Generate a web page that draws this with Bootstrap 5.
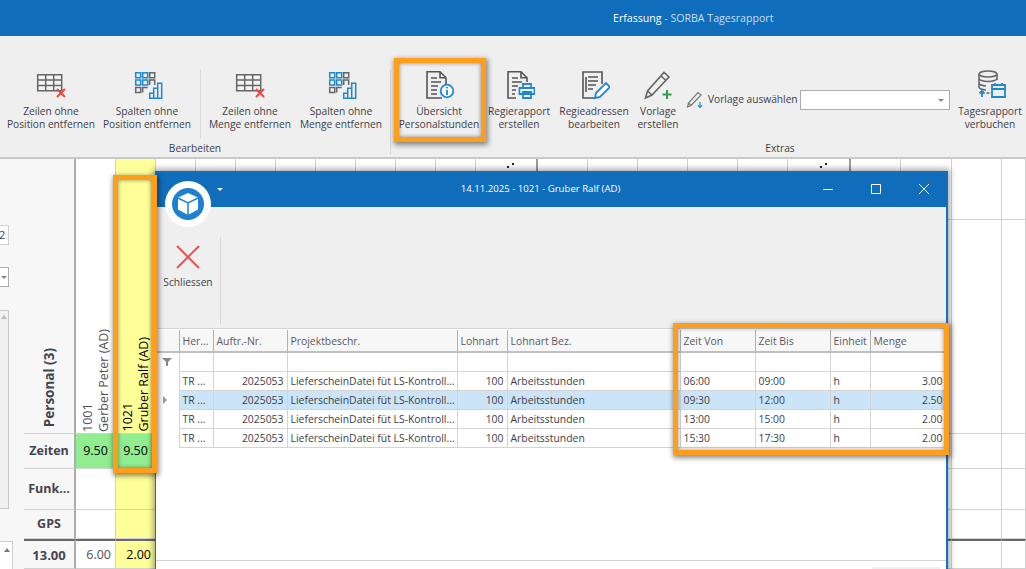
<!DOCTYPE html>
<html lang="de">

<head>
    <meta charset="UTF-8">
    <meta name="viewport" content="width=device-width, initial-scale=1.0">
    <title>Erfassung - SORBA Tagesrapport</title>
    <link rel="stylesheet" href="https://cdn.jsdelivr.net/npm/bootstrap@5.3.0/dist/css/bootstrap.min.css">
    <style>
        html, body { height: 569px; overflow: hidden; }
        body { width: 1026px; position: relative; font-family: "Open Sans", "Liberation Sans", sans-serif; font-size: 10.2px; color: #3e3e48; background: #fff; }

        .app-title { height: 36px; background: #0f6dbc; color: #c9def0; padding-left: 613px; line-height: 36px; font-size: 10.6px; }
        .app-title b { color: #fff; font-weight: 400; }

        .ribbon { height: 123px; background: #efefef; border-bottom: 2px solid #c9c9c9; padding-top: 33px; overflow: hidden; }
        .rb-group { height: 86px; flex: none; position: relative; }
        .rb-first { width: 391px; border-right: 1px solid #d8d8d8; padding-left: 3px; }
        .rb-second { width: 778px; padding-left: 5px; }
        .rb-sep { width: 1px; height: 70px; background: #d8d8d8; margin: 0 4px 0 5px; flex: none; }
        .rb-label { text-align: center; line-height: 13px; position: absolute; left: 0; right: 0; bottom: 0; }
        .rb-btn { flex: none; text-align: center; line-height: 13px; white-space: nowrap; }
        .rb-btn svg { display: block; margin: 0 auto 4px; }
        .w-96 { width: 96px; } .w-90 { width: 90px; } .w-92 { width: 92px; } .w-86 { width: 86px; }
        .w-74 { width: 74px; } .w-76 { width: 76px; } .w-52 { width: 52px; } .w-70 { width: 70px; }
        .tpl-picker { width: 271px; padding: 12px 5px 0 2px; flex: none; height: 50px; }
        .tpl-combo { width: 150px; height: 20px; background: #fff; border: 1px solid #acacac; margin-left: 2px; padding-right: 5px; }
        .caret-grey { width: 0; height: 0; border: 3px solid transparent; border-top: 3px solid #888; border-bottom: 0; }

        .sheet-wrap { height: 410px; overflow: hidden; }
        .side-panel { width: 24px; flex: none; background: #f7f7f7; }
        .side-field { width: 9px; height: 20px; background: #fff; border: 1px solid #d0d0d0; border-left: 0; margin-top: 66px; font-size: 11px; line-height: 18px; overflow: hidden; text-indent: -1px; }
        .side-combo { width: 9px; height: 20px; background: #fff; border: 1px solid #acacac; border-left: 0; margin-top: 22px; padding-right: 1px; }
        .side-list { width: 9px; height: 199px; background: #f0f0f0; border: 1px solid #c8c8c8; border-left: 0; margin-top: 23px; padding: 4px 1px; }
        .side-list2 { width: 13px; height: 40px; background: #fff; border: 1px solid #d0d0d0; border-left: 0; margin-top: 32px; padding: 6px 2px; }
        .caret-up { width: 0; height: 0; border: 3px solid transparent; border-bottom: 4px solid #bbb; border-top: 0; }
        .side-list2 .caret-up { border-bottom-color: #777; }

        .sheet { display: grid; grid-template-rows: 61px 214px 35px 41px 29px 30px; flex: none; width: 1002px; }
        .sc { border-right: 1px solid #d2d2d2; border-bottom: 1px solid #d2d2d2; background: #fff; color: #000; line-height: 14px; overflow: hidden; font-size: 12.5px; display: flex; }
        .sc.span2 { grid-row: span 2; }
        .sc.lbl { background: #f7f7f7; border-right: 2px solid #acacac; font-weight: 700; color: #454550; justify-content: center; align-items: center; }
        .sc.hl { background: #ffff99; }
        .sc.ok { background: #90ee90; justify-content: center; align-items: center; }
        .sc.fat { border-right: 2px solid #9a9a9a; }
        .sc.head { align-items: flex-end; justify-content: center; color: #50505a; }
        .sc.head.hl { color: #000; }
        .sc.total { border-top: 2px solid #686868; align-items: center; justify-content: flex-end; padding-right: 4px; }
        .sc.total.lbl { justify-content: center; font-size: 13px; padding-right: 0; }
        .sc.grey { color: #50505a; }
        .vtext { writing-mode: vertical-rl; transform: rotate(180deg); line-height: 16px; margin-bottom: 1px; white-space: nowrap; }
        .sc.lbl .vtext { font-size: 13.5px; margin-bottom: 6px; }
        .clip-dots { display: block; margin: 4px 22px 0 auto; }

        .dlg { position: absolute; left: 155px; top: 171px; width: 793px; height: 420px; background: #fff; border: 1px solid #1570bd; border-width: 0 2px 0 1px; box-shadow: 0 0 6px 2px rgba(0, 0, 0, .35); }
        .dlg-title { height: 36px; background: #0f6dbc; color: #fff; line-height: 36px; margin: 0 -2px 0 -1px; }
        .dlg-name { flex: 1; text-align: center; padding-left: 122px; font-size: 9.6px; }
        .dlg-ctl { width: 48px; flex: none; height: 36px; }
        .dlg-logo { width: 46px; height: 46px; border-radius: 50%; background: #fff; position: absolute; left: 9px; top: 10px; }
        .dlg-caret { width: 0; height: 0; border: 3px solid transparent; border-top: 3px solid #fff; border-bottom: 0; position: absolute; left: 61px; top: 17px; }
        .dlg-tools { height: 122px; background: #efefef; padding-top: 30px; border-bottom: 1px solid #d4d4d4; }
        .tool-btn { width: 64px; text-align: center; line-height: 13px; flex: none; padding-top: 7px; }
        .tool-btn svg { display: block; margin: 0 auto 6px; }
        .tool-sep { width: 1px; height: 87px; background: #d8d8d8; flex: none; }

        .grid-tbl { table-layout: fixed; border-collapse: collapse; width: 790px; margin: 1px 0 0; }
        .grid-tbl td { padding: 0 3px; height: 19px; line-height: 18px; font-size: 10.4px; border: 1px solid #d4d4d4; color: #3e3e48; white-space: nowrap; overflow: hidden; background: #fff; }
        .grid-tbl td.r { text-align: right; padding-right: 3px; }
        .grid-tbl td.ind { border-left: 0; border-top: 0; border-bottom: 0; background: #fff; padding: 0 0 0 6px; }
        .grid-tbl tr.hd td { height: 22px; background: #f7f7f7; border-top: 0; border-bottom: 2px solid #c0c0c0; color: #5a5a64; border-left: 1px solid #b0b0b0; border-right: 0; }
        .grid-tbl tr.hd td.ind { border-left: 0; }
        .grid-tbl tr.sel td { background: #cce4f7; border-top: 1px dotted #222; border-bottom: 1px dotted #222; }
        .grid-tbl tr.sel td.ind { background: #fff; border-top: 0; border-bottom: 0; }
        .tri-r { display: block; width: 0; height: 0; border: 4px solid transparent; border-left: 4px solid #999; border-right: 0; margin-left: 1px; }
        .dlg-foot { position: absolute; left: 0; right: 0; top: 389px; border-top: 1px solid #d4d4d4; }
        .dlg-foot-box { width: 68px; height: 8px; background: #efefef; margin: 6px 6px 0 auto; }

        .mark-box { position: absolute; border: 5px solid #ff9e1b; box-shadow: 1px 2px 5px 1px rgba(0, 0, 0, .45), inset 0 0 4px rgba(0, 0, 0, .45); pointer-events: none; }
        .mark-btn { left: 394px; top: 58px; width: 92px; height: 84px; }
        .mark-col { left: 113px; top: 175px; width: 44px; height: 298px; }
        .mark-time { left: 673px; top: 323px; width: 276px; height: 132px; }
    </style>
</head>

<body>
    <svg width="0" height="0" class="position-absolute">
        <symbol id="i-table" viewBox="0 0 32 32">
            <path d="M2.700 5.700h24v16h-24zM2.700 11h24M2.700 16.400h24M10.700 5.700v16M18.700 5.700v16" fill="#f4f4f4" stroke="#666" stroke-width="1.500"/>
            <path d="M22 20l8 8M30 20l-8 8" stroke="#ee4444" stroke-width="2" fill="none"/>
        </symbol>
        <symbol id="i-cols" viewBox="0 0 32 32">
            <g fill="none" stroke-width="1.500">
                <path d="M4.700 3.700h5v5h-5zM11.700 3.700h5v5h-5zM4.700 11h5v5h-5zM11.700 11h5v5h-5z" stroke="#1e88d2"/>
                <path d="M18.700 3.700h5v5h-5zM23.700 16v-5h-5v5M4.700 18.500h5v5h-5zM16.700 18.500h-5v5" stroke="#666"/>
                <path d="M18.700 29.300v-5h4v5zM22.700 29.300v-10h4v10zM26.700 29.300v-15h4v15z" stroke="#1e88d2"/>
            </g>
        </symbol>
    </svg>

    <div class="app-title"><b>Erfassung</b> - SORBA Tagesrapport</div>

    <div class="ribbon d-flex">
        <div class="rb-group rb-first d-flex">
            <div class="rb-btn w-96"><svg width="32" height="32"><use href="#i-table"/></svg>Zeilen ohne<br>Position entfernen</div>
            <div class="rb-btn w-96"><svg width="32" height="32"><use href="#i-cols"/></svg>Spalten ohne<br>Position entfernen</div>
            <div class="rb-sep"></div>
            <div class="rb-btn w-90"><svg width="32" height="32"><use href="#i-table"/></svg>Zeilen ohne<br>Menge entfernen</div>
            <div class="rb-btn w-92"><svg width="32" height="32"><use href="#i-cols"/></svg>Spalten ohne<br>Menge entfernen</div>
            <div class="rb-label">Bearbeiten</div>
        </div>
        <div class="rb-group rb-second d-flex">
            <div class="rb-btn w-86">
                <svg width="32" height="32" viewBox="0 0 32 32" fill="none" stroke="#555" stroke-width="1.600">
                    <path d="M19 29H4V2.800h13l6 6V15M17 2.800v6h6M8 9h6M8 13h10M8 17h7M8 21h6M8 25h6"/>
                    <circle cx="24" cy="22" r="6.300" fill="#fff" stroke="#1e88d2" stroke-width="1.800"/>
                    <path d="M24 21v5M24 18v1.600" stroke="#1e88d2" stroke-width="1.800"/>
                </svg>Übersicht<br>Personalstunden</div>
            <div class="rb-btn w-74">
                <svg width="32" height="32" viewBox="0 0 32 32" fill="none" stroke="#555" stroke-width="1.600">
                    <path d="M13 29H5V2.800h13l6 6V13M18 2.800v6h6M9 9h6M9 13h10M9 17h6M9 21h4M9 25h3"/>
                    <path d="M20 15h8v4h-8zM16.500 19h15v6h-15zM20 23h8v6h-8z" fill="#fff" stroke="#1e88d2" stroke-width="1.800"/>
                </svg>Regierapport<br>erstellen</div>
            <div class="rb-btn w-76">
                <svg width="32" height="32" viewBox="0 0 32 32" fill="none" stroke="#555" stroke-width="1.600">
                    <path d="M24 15V3H5v26h12M10 8h10M10 12h10M10 16h8M10 20h5M8 8v15"/>
                    <path d="M17 29l1-5L28 14l4 4-10 10z" fill="#fff" stroke="#1e88d2" stroke-width="1.800"/>
                </svg>Regieadressen<br>bearbeiten</div>
            <div class="rb-btn w-52">
                <svg width="32" height="32" viewBox="0 0 32 32" fill="none" stroke="#666" stroke-width="1.600">
                    <path d="M3.500 29l2-7L22 3.500l5 4.500L10 26zM5.500 22l4.500 4M19 7l5 4.500"/>
                    <path d="M25 21v9M20.500 25.500h9" stroke="#2f9e4f" stroke-width="2"/>
                </svg>Vorlage<br>erstellen</div>
            <div class="tpl-picker d-flex align-items-center">
                <svg width="18" height="18" viewBox="0 0 18 18" fill="none" stroke="#777" stroke-width="1.200" class="me-1 flex-shrink-0">
                    <path d="M1.500 16l1-4L12 1.500l3 2.500L5 14.500zM2.500 12l2.500 2.500"/>
                    <path d="M14 11v5M12 14.500l2 2 2-2" stroke="#1e88d2"/>
                </svg>
                <span class="text-nowrap">Vorlage auswählen</span>
                <div class="tpl-combo d-flex align-items-center justify-content-end flex-shrink-0"><div class="caret-grey"></div></div>
            </div>
            <div class="rb-btn w-70">
                <svg width="32" height="32" viewBox="0 0 32 32" fill="none" stroke="#666" stroke-width="1.600">
                    <ellipse cx="14" cy="5" rx="9" ry="3"/>
                    <path d="M5 5v13c0 1.600 3 3 7 3M23 5v6M5 9.500c0 1.600 4 3 9 3s9-1.400 9-3M5 14c0 1.600 3 3 7 3"/>
                    <path d="M18 16h13v12H18zM18 20h13M21 14v3M28 14v3" stroke="#1e88d2" stroke-width="1.800" fill="#efefef"/>
                    <path d="M8 28v-6M5.500 24.500L8 22l2.500 2.500" stroke="#1e88d2" stroke-width="1.800"/>
                    <path d="M12.500 24h3" stroke="#666"/>
                </svg>Tagesrapport<br>verbuchen</div>
            <div class="rb-label">Extras</div>
        </div>
    </div>

    <div class="sheet-wrap d-flex">
        <div class="side-panel">
            <div class="side-field">2</div>
            <div class="side-combo d-flex align-items-center justify-content-end"><div class="caret-grey"></div></div>
            <div class="side-list d-flex justify-content-end"><div class="caret-up"></div></div>
            <div class="side-list2 d-flex justify-content-end"><div class="caret-up"></div></div>
        </div>
        <div class="sheet" id="sheet"></div>
    </div>

    <div class="dlg">
        <div class="dlg-title d-flex">
            <div class="dlg-name">14.11.2025 - 1021 - Gruber Ralf (AD)</div>
            <div class="dlg-ctl d-flex align-items-center justify-content-center">
                <svg width="12" height="12" fill="none" stroke="#fff"><path d="M1 6.500h10"/></svg>
            </div>
            <div class="dlg-ctl d-flex align-items-center justify-content-center">
                <svg width="12" height="12" fill="none" stroke="#fff"><path d="M1.500 1.500h9v9h-9z"/></svg>
            </div>
            <div class="dlg-ctl d-flex align-items-center justify-content-center">
                <svg width="12" height="12" fill="none" stroke="#fff"><path d="M1 1l10 10M11 1L1 11"/></svg>
            </div>
        </div>
        <div class="dlg-logo">
            <svg width="46" height="46" viewBox="0 0 46 46">
                <circle cx="23" cy="23" r="16" fill="#1e80cf"/>
                <path d="M23 12l10 4.500v12L23 34l-10-5.500v-12z" fill="#fff"/>
                <path d="M13 17l10 5 10-5M23 22v12" fill="none" stroke="#1e80cf" stroke-width="1.500"/>
            </svg>
        </div>
        <div class="dlg-caret"></div>
        <div class="dlg-tools d-flex">
            <div class="tool-btn">
                <svg width="26" height="26" viewBox="0 0 26 26" fill="none" stroke="#ee4a4a" stroke-width="1.800"><path d="M2 2l22 22M24 2L2 24"/></svg>Schliessen
            </div>
            <div class="tool-sep"></div>
        </div>
        <table class="grid-tbl">
            <colgroup id="grid-cols"></colgroup>
            <tbody id="grid-body"></tbody>
        </table>
        <div class="dlg-foot"><div class="dlg-foot-box"></div></div>
    </div>

    <div class="mark-box mark-btn"></div>
    <div class="mark-box mark-col"></div>
    <div class="mark-box mark-time"></div>

    <script src="https://cdn.jsdelivr.net/npm/bootstrap@5.3.0/dist/js/bootstrap.bundle.min.js"></script>
    <script>
        // background sheet: label column + person columns
        const sheetWidths = [52, 40, 40, 40, 40, 40, 40, 40, 40, 40, 40, 62, 50, 50, 50, 50, 50, 63, 50, 51, 50, 24];
        const fat = [11, 17];
        const lastBig = 10;
        const clipDots = '<svg class="clip-dots" width="8" height="6"><path d="M6 0h2v2H6zM1 3h2v2H1z" fill="#222"/></svg>';
        const sheet = document.getElementById('sheet');

        sheet.style.gridTemplateColumns = sheetWidths.map(w => w + 'px').join(' ');

        function sheetCell(i, text = '', extra = '') {
            let cls = 'sc ' + extra;
            if (i === 2) cls += ' hl';
            if (fat.includes(i)) cls += ' fat';
            return `<div class="${cls}">${text}</div>`;
        }

        const heads = { 1: '1001<br>Gerber Peter (AD)', 2: '1021<br>Gruber Ralf (AD)' };
        let row1 = '<div class="sc lbl span2 align-items-end"><div class="vtext">Personal (3)</div></div>';
        let row2 = '';
        for (let i = 1; i < sheetWidths.length; i++) {
            if (i <= lastBig) {
                const txt = heads[i] ? `<div class="vtext">${heads[i]}</div>` : '';
                row1 += sheetCell(i, txt, 'head span2');
            } else {
                row1 += sheetCell(i, fat.includes(i) ? `<div class="w-100">${clipDots}</div>` : '');
                row2 += sheetCell(i);
            }
        }

        function plainRow(label, cells, extra = '') {
            let html = `<div class="sc lbl ${extra}">${label}</div>`;
            for (let i = 1; i < sheetWidths.length; i++) html += cells(i);
            return html;
        }

        sheet.innerHTML = row1 + row2
            + plainRow('Zeiten', i => i <= 2 ? '<div class="sc ok">9.50</div>' : sheetCell(i))
            + plainRow('Funk...', i => sheetCell(i))
            + plainRow('GPS', i => sheetCell(i))
            + plainRow('13.00', i => i === 1 ? sheetCell(i, '6.00', 'total grey') : i === 2 ? sheetCell(i, '2.00', 'total') : sheetCell(i, '', 'total'), 'total');

        // dialog grid
        const gridWidths = [23, 34, 74, 170, 50, 173, 75, 75, 40, 76];
        const gridHead = ['Her...', 'Auftr.-Nr.', 'Projektbeschr.', 'Lohnart', 'Lohnart Bez.', 'Zeit Von', 'Zeit Bis', 'Einheit', 'Menge'];
        const times = [
            ['06:00', '09:00', '3.00'],
            ['09:30', '12:00', '2.50'],
            ['13:00', '15:00', '2.00'],
            ['15:30', '17:30', '2.00']
        ];

        document.getElementById('grid-cols').innerHTML = gridWidths.map(w => `<col style="width:${w}px">`).join('');

        let gridHtml = '<tr class="hd"><td class="ind"></td>' + gridHead.map(h => `<td>${h}</td>`).join('') + '</tr>';
        gridHtml += `<tr class="flt"><td class="ind"><svg width="10" height="10" class="d-block"><path d="M0 1h10L6 5v4H4V5z" fill="#888"/></svg></td>` + gridHead.map(() => '<td></td>').join('') + '</tr>';
        times.forEach((t, idx) => {
            gridHtml += `<tr class="${idx === 1 ? 'sel' : ''}">
                <td class="ind">${idx === 1 ? '<span class="tri-r"></span>' : ''}</td>
                <td>TR ...</td>
                <td class="r">2025053</td>
                <td>LieferscheinDatei füt LS-Kontroll...</td>
                <td class="r">100</td>
                <td>Arbeitsstunden</td>
                <td>${t[0]}</td>
                <td>${t[1]}</td>
                <td>h</td>
                <td class="r">${t[2]}</td>
            </tr>`;
        });
        document.getElementById('grid-body').innerHTML = gridHtml;
    </script>
</body>

</html>
